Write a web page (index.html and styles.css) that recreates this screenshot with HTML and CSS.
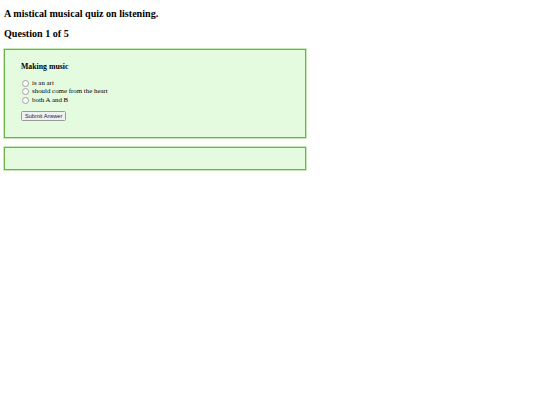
FILE: index.html
```html
<!DOCTYPE html>
<html>
<head>
<meta charset="utf-8">
<link rel="stylesheet" href="styles.css">
</head>
<body>
<div class="page">
  <h3 class="title first">A mistical musical quiz on listening.</h3>
  <h3 class="title second">Question 1 of 5</h3>
  <div class="panel quiz">
    <h4 class="qtext">Making music</h4>
    <div class="options">
      <label class="opt"><span class="radio"></span>is an art</label>
      <label class="opt"><span class="radio"></span>should come from the heart</label>
      <label class="opt"><span class="radio"></span>both A and B</label>
    </div>
    <button class="submit">Submit Answer</button>
  </div>
  <div class="panel result"></div>
</div>
</body>
</html>
```
FILE: styles.css
```css
html, body { background: #fff; }
body {
  margin: 0;
  font-family: "Liberation Serif", "Times New Roman", serif;
  color: #000;
}
.page {
  display: flex;
  flex-direction: column;
  align-items: flex-start;
  padding: 4px;
}
.title {
  font-size: 10.1px;
  font-weight: bold;
  margin: 0;
  line-height: 11.4px;
}
.first { margin-top: 3.5px; }
.second { margin-top: 8.6px; }
.panel {
  box-sizing: border-box;
  width: 302px;
  background: #e4fbe0;
  border: 1.6px solid #6eb14a;
  box-shadow: 0 0 0 0.8px #b9e4a6;
}
.quiz {
  margin-top: 9.6px;
  padding: 9px 16px 15px 16px;
}
.qtext {
  font-size: 7.8px;
  font-weight: bold;
  margin: 3.5px 0 8px 0;
  line-height: 9px;
}
.options {
  display: flex;
  flex-direction: column;
  font-size: 6.9px;
  line-height: 8.4px;
}
.opt {
  display: flex;
  align-items: center;
}
.radio {
  width: 5px;
  height: 5px;
  border: 0.6px solid #a0a0a0;
  border-radius: 50%;
  background: #fff;
  margin: 0 3px 0 1px;
}
.submit {
  margin-top: 5px;
  font-family: "Liberation Sans", Arial, sans-serif;
  font-size: 5.6px;
  padding: 1px 3px;
  height: 10px;
  line-height: 7px;
  background: #f0f0f0;
  border: 0.6px solid #9a9a9a;
  border-radius: 1.5px;
  color: #222;
}
.result {
  margin-top: 9px;
  height: 23px;
}
```
